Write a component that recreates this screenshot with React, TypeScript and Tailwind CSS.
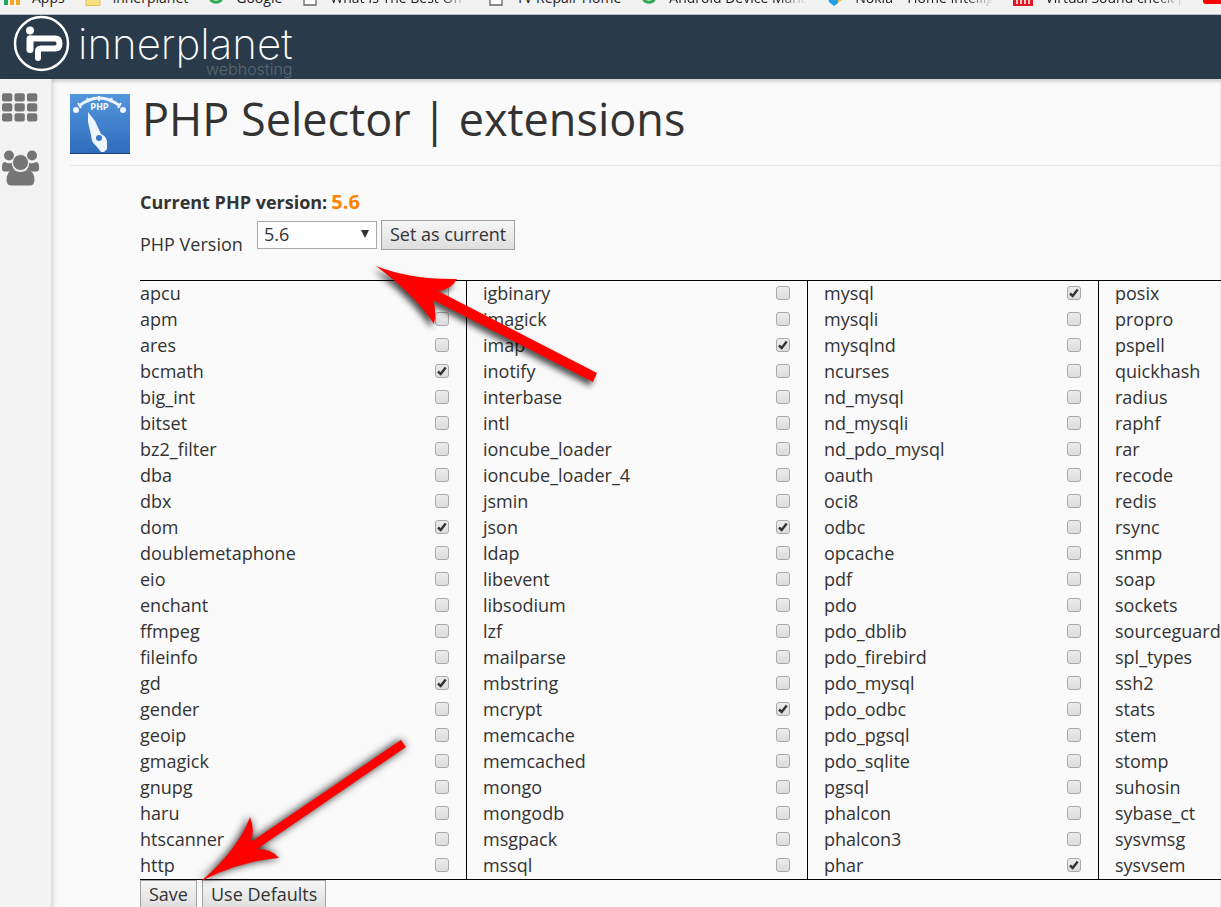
import { ReactNode } from 'react';

interface IBookmark {
    label: string;
    icon: ReactNode;
    faded?: boolean;
}

interface IColumn {
    names: string[];
    checked: string[];
}

const AppsIcon = () => (
    <svg className="w-4 h-4 shrink-0" viewBox="0 0 16 16">
        <path fill="#22a565" d="M0 0h4v4H0zM0 5h4v4H0zM0 10h4v5H0z" />
        <path fill="#f5a623" d="M6 0h4v4H6zM6 5h4v4H6zM6 10h4v5H6zM12 0h4v4h-4zM12 5h4v4h-4zM12 10h4v5h-4z" />
    </svg>
);

const FolderIcon = () => (
    <svg className="w-4 h-4 shrink-0" viewBox="0 0 16 16">
        <path fill="#f9e07f" stroke="#e0bf52" d="M1 2h6l2 2h6v11.5H1z" />
    </svg>
);

const GoogleIcon = () => (
    <svg className="w-4 h-4 shrink-0" viewBox="0 0 16 16" fill="none" strokeWidth="3">
        <path stroke="#ea4335" d="M3 5a6 6 0 0 1 9-2" />
        <path stroke="#34a853" d="M2.5 9a6 5.500 0 0 0 11 0" />
        <path stroke="#4285f4" d="M8 8h6" />
    </svg>
);

const PageIcon = () => (
    <svg className="w-4 h-4 shrink-0" viewBox="0 0 16 16">
        <path fill="#fff" stroke="#666" strokeWidth="1.3" d="M2 1h8l4 4v10H2z" />
    </svg>
);

const PinIcon = () => (
    <svg className="w-4 h-4 shrink-0" viewBox="0 0 16 16">
        <path fill="#f3c04b" d="M8 2h7v8l-4 3z" />
        <path fill="#1ba1e2" d="M0 4h11v9l-4 3-5-4z" />
    </svg>
);

const MtIcon = () => (
    <svg className="w-5 h-4 shrink-0" viewBox="0 0 20 16">
        <path fill="#e21b22" d="M0 0h20v16H0z" />
        <path stroke="#fff" strokeWidth="1.5" d="M4 5v9M8 5v9M12 5v9M16 5v9" />
    </svg>
);

const TubeIcon = () => (
    <svg className="w-5 h-4 shrink-0" viewBox="0 0 20 16">
        <rect fill="#f00" width="20" height="14" rx="3" />
    </svg>
);

const bookmarks: IBookmark[] = [
    { label: 'Apps', icon: <AppsIcon /> },
    { label: 'innerplanet', icon: <FolderIcon /> },
    { label: 'Google', icon: <GoogleIcon /> },
    { label: 'What Is The Best Off A', icon: <PageIcon />, faded: true },
    { label: 'TV Repair Home', icon: <PageIcon /> },
    { label: 'Android Device Manager', icon: <GoogleIcon />, faded: true },
    { label: 'Nokia – Home Intelligence', icon: <PinIcon />, faded: true },
    { label: 'Virtual Sound check plus', icon: <MtIcon />, faded: true },
    { label: '', icon: <TubeIcon /> },
];

const columns: IColumn[] = [
    {
        names: [
            'apcu', 'apm', 'ares', 'bcmath', 'big_int', 'bitset', 'bz2_filter', 'dba', 'dbx', 'dom',
            'doublemetaphone', 'eio', 'enchant', 'ffmpeg', 'fileinfo', 'gd', 'gender', 'geoip',
            'gmagick', 'gnupg', 'haru', 'htscanner', 'http',
        ],
        checked: ['bcmath', 'dom', 'gd'],
    },
    {
        names: [
            'igbinary', 'imagick', 'imap', 'inotify', 'interbase', 'intl', 'ioncube_loader',
            'ioncube_loader_4', 'jsmin', 'json', 'ldap', 'libevent', 'libsodium', 'lzf', 'mailparse',
            'mbstring', 'mcrypt', 'memcache', 'memcached', 'mongo', 'mongodb', 'msgpack', 'mssql',
        ],
        checked: ['imap', 'json', 'mcrypt'],
    },
    {
        names: [
            'mysql', 'mysqli', 'mysqlnd', 'ncurses', 'nd_mysql', 'nd_mysqli', 'nd_pdo_mysql', 'oauth',
            'oci8', 'odbc', 'opcache', 'pdf', 'pdo', 'pdo_dblib', 'pdo_firebird', 'pdo_mysql',
            'pdo_odbc', 'pdo_pgsql', 'pdo_sqlite', 'pgsql', 'phalcon', 'phalcon3', 'phar',
        ],
        checked: ['mysql', 'phar'],
    },
    {
        names: [
            'posix', 'propro', 'pspell', 'quickhash', 'radius', 'raphf', 'rar', 'recode', 'redis',
            'rsync', 'snmp', 'soap', 'sockets', 'sourceguardian', 'spl_types', 'ssh2', 'stats', 'stem',
            'stomp', 'suhosin', 'sybase_ct', 'sysvmsg', 'sysvsem',
        ],
        checked: [],
    },
];

function BookmarksBar() {
    return (
        <nav className="flex h-[15px] shrink-0 items-end gap-5 overflow-hidden border-b border-[#b9c0c5] bg-[#f2f2f2] pb-2 pl-1 text-sm leading-4 text-[#222]">
            {bookmarks.map((item, index) => (
                <a key={index} href="#" aria-label={item.label || 'Video'} className="flex shrink-0 items-end gap-3">
                    {item.icon}
                    <span
                        className={
                            item.faded
                                ? 'w-[138px] overflow-hidden whitespace-nowrap mask-r-from-80%'
                                : 'whitespace-nowrap'
                        }
                    >
                        {item.label}
                    </span>
                </a>
            ))}
        </nav>
    );
}

function Header() {
    return (
        <header className="flex h-16 shrink-0 items-start bg-[#293a4a] pl-[13px]">
            <a href="#" className="flex items-start gap-2 text-white">
                <svg className="h-[57px] w-[57px]" viewBox="0 0 57 57" fill="none" stroke="#fff" strokeLinecap="round">
                    <circle cx="28.5" cy="28.5" r="26.5" strokeWidth="2.500" />
                    <circle cx="17" cy="15.500" r="4" fill="#fff" stroke="none" />
                    <path strokeWidth="7" d="M17 24v10.500" />
                    <path strokeWidth="6" strokeLinejoin="round" d="M17 23.500h25q4.500 0 4.500 5t-4.500 5H28q-3 0-3 3V43" />
                </svg>
                <span className="flex flex-col items-end font-['Inter',sans-serif]">
                    <span className="text-[42px] leading-[58px] font-extralight">innerplanet</span>
                    <span className="-mt-3 text-base leading-4 font-light text-[#5b6772]">webhosting</span>
                </span>
            </a>
        </header>
    );
}

function Sidebar() {
    return (
        <aside className="z-10 flex w-[52px] shrink-0 flex-col items-start gap-7 border-r border-[#dcdcdc] bg-[#f3f3f3] pt-3.5 pl-0.5 shadow-[2px_0_4px_rgba(0,0,0,0.12)]">
            <button type="button" aria-label="Tools">
                <svg className="h-[29px] w-9" viewBox="0 0 36 29" fill="#757575">
                    {[0, 10, 20].map((y) =>
                        [0, 12.5, 25].map((x) => (
                            <rect key={`${x}-${y}`} x={x} y={y + 0.3} width="10.300" height="8.200" rx="2" />
                        ))
                    )}
                </svg>
            </button>
            <button type="button" aria-label="Users">
                <svg className="h-9 w-[38px]" viewBox="0 0 38 36" fill="#757575">
                    <circle cx="7" cy="5.500" r="5" />
                    <circle cx="30" cy="5.500" r="5" />
                    <path d="M0 17q0-5 3-5 3 2 7 1 0 5 3 7-3 0-4 1.500H3q-3 0-3-2.500zM37 17q0-5-3-5-3 2-7 1 0 5-3 7 3 0 4 1.500h6q3 0 3-2.500z" />
                    <circle cx="18.500" cy="12.500" r="8" stroke="#f3f3f3" />
                    <path d="M12 20q6.500 4 13 0 7 0 7.500 10 0 5.500-5 5.500h-18q-5 0-5-5.500Q5 20 12 20z" />
                </svg>
            </button>
        </aside>
    );
}

function GaugeIcon() {
    return (
        <svg className="h-[60px] w-[60px]" viewBox="0 0 60 60">
            <defs>
                <linearGradient id="gauge" x1="0" y1="0" x2="0" y2="1">
                    <stop offset="0" stopColor="#5396dd" />
                    <stop offset="1" stopColor="#2f6cbc" />
                </linearGradient>
            </defs>
            <path fill="url(#gauge)" d="M0 0h60v60H0z" />
            <path fill="none" stroke="#1c4486" d="M0 59.500h60" />
            <path fill="none" stroke="#eef5fc" strokeWidth="3" d="M9 12Q29 -4 50 12" />
            <path stroke="#eef5fc" strokeWidth="2" d="M8 9l3 5M17 4l2 4M29 2v5M42 4l-2 4M51 9l-3 5" />
            <circle cx="6" cy="16" r="3" fill="#eef5fc" />
            <circle cx="53" cy="16" r="3" fill="#eef5fc" />
            <text x="29.500" y="15.500" textAnchor="middle" fontFamily="DejaVu Sans" fontWeight="bold" fontSize="8" fill="#eef5fc">
                PHP
            </text>
            <path fill="#eef5fc" d="M18 18l7 9 6 13q5 2 6 7v8l-3 3h-3l-4-5q-6-5-6-12l-3-13z" />
            <circle cx="29" cy="44" r="3" fill="#3a76c2" />
        </svg>
    );
}

function ExtensionColumn({ names, checked }: IColumn) {
    return (
        <ul className="border-l border-black pr-[17px] pl-4 first:border-l-0 first:pl-0 last:w-[291px]">
            {names.map((name) => (
                <li key={name} className="flex h-[26px] items-center justify-between pb-0.5">
                    <label htmlFor={name} className="leading-6">
                        {name}
                    </label>
                    <span className="grid place-items-center">
                        <input
                            id={name}
                            type="checkbox"
                            defaultChecked={checked.includes(name)}
                            className="peer col-start-1 row-start-1 h-3.5 w-3.5 appearance-none rounded-[3px] border border-[#a9a9a9] bg-linear-to-b from-[#ececec] to-[#dcdcdc]"
                        />
                        <svg
                            className="pointer-events-none invisible col-start-1 row-start-1 h-3 w-3 peer-checked:visible"
                            viewBox="0 0 12 12"
                        >
                            <path fill="none" stroke="#333" strokeWidth="2.400" d="M2 6.500l2.700 2.500 5-6.500" />
                        </svg>
                    </span>
                </li>
            ))}
        </ul>
    );
}

const buttonStyle =
    'border border-[#a0a0a0] bg-linear-to-b from-[#f6f6f6] to-[#dedede] px-2 pb-0.5 h-[30px] leading-6';

// Pointers drawn over the page
function Arrows() {
    return (
        <svg
            className="pointer-events-none absolute top-0 left-0 z-20 h-[907px] w-[640px]"
            viewBox="0 0 640 907"
            fill="#f00"
        >
            <path
                className="drop-shadow-[-3px_4px_3px_rgba(0,0,0,0.7)]"
                d="M376 266Q412 280 457 279Q452 289 438 291L597 373L593 382L433 300Q437 311 434 324Q415 295 376 266z"
            />
            <path
                className="drop-shadow-[-1px_0px_4px_rgba(0,0,0,0.9)]"
                d="M201 881Q238 850 250 817Q255 829 251 842L401 740L406 747L257 849Q272 849 279 858Q240 861 201 881z"
            />
        </svg>
    );
}

export default function App() {
    return (
        <div className="relative flex h-screen flex-col overflow-hidden bg-[#fafafa] font-['Open_Sans',sans-serif] text-lg text-[#333]">
            <BookmarksBar />
            <Header />
            <div className="flex flex-1 shadow-[inset_0_3px_3px_rgba(0,0,0,0.15)]">
                <Sidebar />
                <main className="min-w-0 flex-1 pt-[15px] pl-[18px]">
                    <div className="flex gap-3 border-b border-[#e8e8e8] pb-[11px]">
                        <GaugeIcon />
                        <h1 className="text-[45px] leading-[50px]">PHP Selector | extensions</h1>
                    </div>
                    <div className="pt-5 pl-[70px]">
                        <p className="flex items-center gap-1 leading-8 font-bold">
                            Current PHP version: <span className="text-xl text-[#ff8400]">5.6</span>
                        </p>
                        <div className="flex items-start pt-0.5 pb-[30px]">
                            <label htmlFor="version" className="h-7 w-[117px] pt-2.5">
                                PHP Version
                            </label>
                            <div className="relative mr-1">
                                <select
                                    id="version"
                                    className="mt-px block h-7 w-[120px] appearance-none border border-[#a9a9a9] bg-white px-1.5 pb-0.5 leading-6"
                                >
                                    <option>5.6</option>
                                </select>
                                <svg className="pointer-events-none absolute top-2.5 right-2 h-2 w-2" viewBox="0 0 8 8">
                                    <path fill="#333" d="M0 0h8L4 8z" />
                                </svg>
                            </div>
                            <button type="button" className={buttonStyle}>
                                Set as current
                            </button>
                        </div>
                        <div className="grid grid-cols-[minmax(0,326fr)_minmax(0,341fr)_minmax(0,291fr)_minmax(0,123fr)] border-y border-black">
                            {columns.map((column) => (
                                <ExtensionColumn key={column.names[0]} {...column} />
                            ))}
                        </div>
                        <div className="flex gap-[5px]">
                            <button type="button" className={buttonStyle}>
                                Save
                            </button>
                            <button type="button" className={buttonStyle}>
                                Use Defaults
                            </button>
                        </div>
                    </div>
                </main>
            </div>
            <Arrows />
        </div>
    );
}
